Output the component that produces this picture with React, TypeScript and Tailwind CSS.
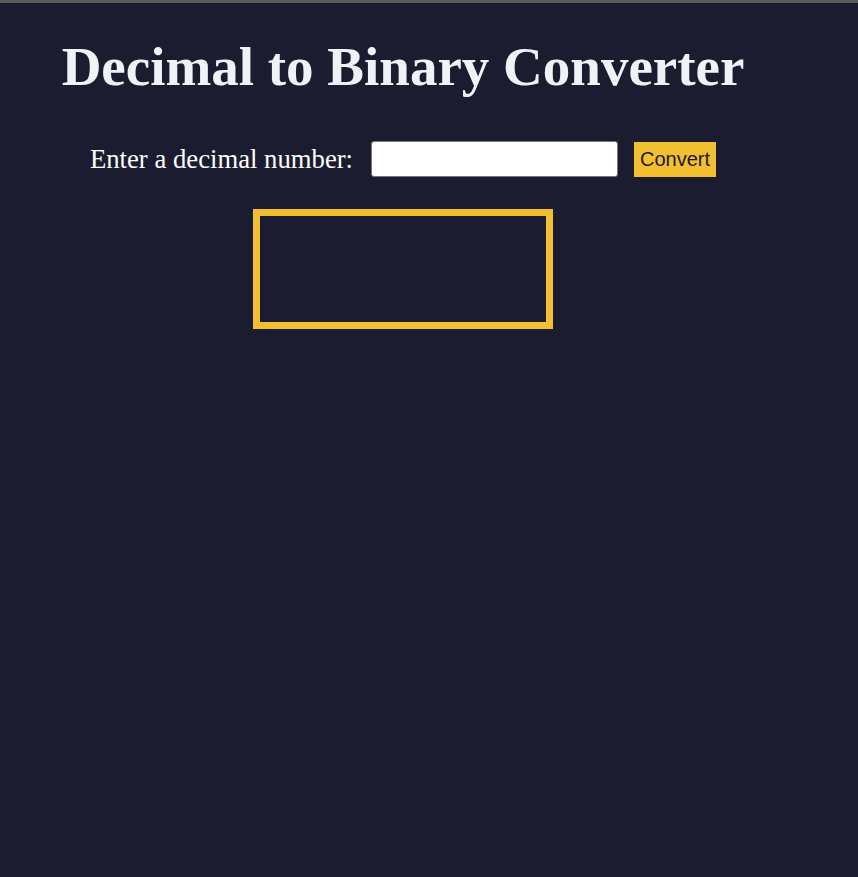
import React from 'react';

const App: React.FC = () => {
  return (
    <div className="min-h-[877px] w-full bg-[#1c1c31] border-t-[3px] border-[#5a5a5a]">
      <div className="w-[806px] flex flex-col items-center" style={{ fontFamily: '"Liberation Serif", "Times New Roman", serif' }}>
        <h1 className="mt-[30px] text-[55px] font-bold leading-[68px] text-[#f1f2f6]">Decimal to Binary Converter</h1>
        <div className="mt-[38px] flex items-center">
          <label className="text-[26.7px] text-white">Enter a decimal number:</label>
          <input
            type="text"
            className="ml-[18px] w-[247px] h-[36px] bg-white rounded-[3px] border border-[#777] outline-none"
          />
          <button
            className="ml-[16px] h-[35px] w-[82px] bg-[#f2bf30] text-[20px] text-[#1a1a1a]"
            style={{ fontFamily: '"Liberation Sans", Arial, sans-serif' }}
          >
            Convert
          </button>
        </div>
        <div className="mt-[30px] w-[300px] h-[120px] border-[7px] border-[#f2bf30]" />
      </div>
    </div>
  );
};

export default App;
